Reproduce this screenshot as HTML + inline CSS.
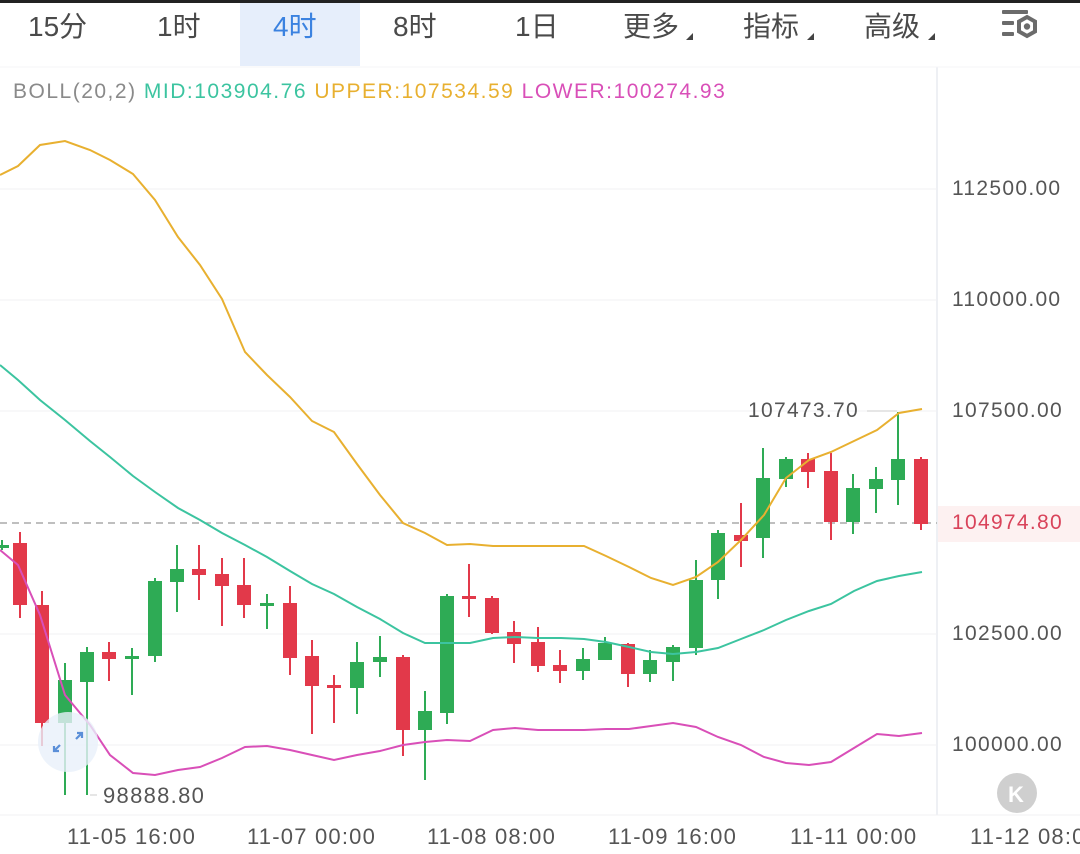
<!DOCTYPE html>
<html><head><meta charset="utf-8"><style>
html,body{margin:0;padding:0;background:#fff;width:1080px;height:854px;overflow:hidden;font-family:"Liberation Sans","Noto Sans CJK SC",sans-serif;}
.top{position:absolute;left:0;top:0;width:1080px;height:3px;background:#222;}
.tabsel{position:absolute;left:240px;top:3px;width:120px;height:63px;background:#e6eefb;}
.tab{position:absolute;top:5px;font-size:28px;color:#4a4a4a;white-space:nowrap;}
.tri{position:absolute;width:0;height:0;border-left:7px solid transparent;border-bottom:7px solid #444;}
.legend{position:absolute;left:13px;top:80px;font-size:21px;letter-spacing:1.5px;white-space:nowrap;}
.ax{position:absolute;left:952px;font-size:21px;color:#555;letter-spacing:1.3px;white-space:nowrap;}
.dt{position:absolute;top:824px;font-size:22px;color:#555;letter-spacing:1.2px;white-space:nowrap;}
</style></head><body>
<div class="top"></div>
<div class="tabsel"></div>
<div class="tab" style="left:28px">15分</div>
<div class="tab" style="left:157px">1时</div>
<div class="tab" style="left:273px;color:#3b82e0">4时</div>
<div class="tab" style="left:393px">8时</div>
<div class="tab" style="left:515px">1日</div>
<div class="tab" style="left:623px">更多</div><div class="tri" style="left:686px;top:33px"></div>
<div class="tab" style="left:743px">指标</div><div class="tri" style="left:807px;top:33px"></div>
<div class="tab" style="left:864px">高级</div><div class="tri" style="left:928px;top:33px"></div>
<svg style="position:absolute;left:1000px;top:8px" width="44" height="34" viewBox="0 0 44 34">
<rect x="2" y="2" width="26" height="4" rx="1" fill="#6b6b6b"/>
<rect x="2" y="13" width="12" height="4" rx="1" fill="#6b6b6b"/>
<rect x="2" y="24" width="12" height="4" rx="1" fill="#6b6b6b"/>
<polygon points="27,9 35,13.5 35,23.5 27,28 19,23.5 19,13.5" fill="none" stroke="#6b6b6b" stroke-width="4"/>
<circle cx="27" cy="18.5" r="3.2" fill="#6b6b6b"/>
</svg>
<div class="legend"><span style="color:#8a8a8a">BOLL(20,2)</span> <span style="color:#3cc4a0">MID:103904.76</span> <span style="color:#e8b030">UPPER:107534.59</span> <span style="color:#d94fb8">LOWER:100274.93</span></div>

<svg style="position:absolute;left:0;top:0" width="1080" height="854">
<line x1="937" y1="67" x2="937" y2="815" stroke="#eef0f4" stroke-width="2"/>
<line x1="0" y1="67" x2="1080" y2="67" stroke="#f4f5f7" stroke-width="1"/>
<g stroke="#f0f1f3" stroke-width="1">
<line x1="0" y1="189" x2="937" y2="189"/><line x1="0" y1="300" x2="937" y2="300"/>
<line x1="0" y1="411" x2="937" y2="411"/><line x1="0" y1="634" x2="937" y2="634"/>
<line x1="0" y1="745" x2="937" y2="745"/><line x1="0" y1="815" x2="1080" y2="815"/>
</g>
<line x1="0" y1="523" x2="937" y2="523" stroke="#aaa" stroke-width="1.5" stroke-dasharray="7,5"/>
<rect x="938" y="506" width="142" height="36" fill="#fdf1f1"/>
<g id="c"></g>
<polyline fill="none" stroke="#e8b030" stroke-width="2" points="0,175 18,166 40,145 65,141 90,150 110,160 133,174 155,200 178,237 200,265 222,299 245,352 267,375 290,397 312,421 334,432 357,464 380,495 403,523 425,533 447,545 470,544 493,546 515,546 538,546 561,546 584,546 606,556 629,567 651,578 673,585 696,577 718,562 741,540 764,515 786,478 809,460 831,452 854,441 877,430 899,413 922,409"/>
<polyline fill="none" stroke="#3cc4a0" stroke-width="2" points="0,365 18,380 40,400 65,420 90,441 110,457 133,476 155,492 178,508 200,520 222,533 245,545 267,557 290,571 312,584 334,594 357,607 380,619 403,633 425,643 447,643 470,643 493,638 515,637 538,638 561,638 584,639 606,642 629,647 651,652 673,654 696,652 718,648 741,639 764,630 786,620 809,611 831,604 854,591 877,581 899,576 922,572"/>
<polyline fill="none" stroke="#d94fb8" stroke-width="2" points="0,550 18,565 40,615 65,695 90,725 110,755 133,773 155,775 178,770 200,767 222,758 245,747 267,746 290,750 312,755 334,760 357,755 380,751 403,745 425,742 447,740 470,741 493,730 515,728 538,730 561,730 584,730 606,729 629,729 651,726 673,723 696,727 718,737 741,745 764,757 786,763 809,765 831,762 854,748 877,734 899,736 922,733"/>
<line x1="90" y1="795" x2="97" y2="795" stroke="#ccc"/>
<line x1="867" y1="411" x2="897" y2="411" stroke="#ccc"/>
<circle cx="68" cy="742" r="30" fill="#e9f0fa" opacity="0.8"/>
<path d="M60,745 l-6,6 m0,-5 v5 h5 M76,739 l6,-6 m-5,0 h5 v5" stroke="#5b8fd8" stroke-width="2.2" fill="none"/>
<circle cx="1017" cy="793" r="20" fill="#cfcfcf"/>
<text x="1008" y="802" font-size="22" fill="#fff" font-family="Liberation Sans" font-weight="bold">K</text>
</svg>
<script>
var d=[[2,545,548,540,550,'g'],[20,543,605,532,618,'r'],[42,605,723,591,746,'r'],[65,680,723,663,795,'g'],[87,652,682,647,795,'g'],[109,652,659,642,681,'r'],[132,656,659,648,695,'g'],[155,581,656,578,662,'g'],[177,569,582,545,612,'g'],[199,569,575,545,600,'r'],[222,574,586,558,626,'r'],[244,585,605,558,618,'r'],[267,603,605,594,629,'g'],[290,603,658,586,675,'r'],[312,656,686,640,734,'r'],[334,685,687,675,723,'r'],[357,662,688,642,714,'g'],[380,657,662,636,677,'g'],[403,657,730,655,756,'r'],[425,711,730,691,780,'g'],[447,596,713,594,724,'g'],[469,596,599,564,617,'r'],[492,598,633,596,634,'r'],[514,632,644,621,663,'r'],[538,642,666,627,672,'r'],[560,665,671,650,683,'r'],[583,659,671,648,680,'g'],[605,643,660,637,660,'g'],[628,644,674,643,687,'r'],[650,660,674,650,682,'g'],[673,647,662,645,681,'g'],[696,580,648,560,655,'g'],[718,533,580,530,599,'g'],[741,535,541,503,567,'r'],[763,478,538,448,558,'g'],[786,459,479,457,487,'g'],[808,459,472,453,488,'r'],[831,471,522,453,540,'r'],[853,488,522,474,534,'g'],[876,479,489,467,513,'g'],[898,459,480,412,505,'g'],[921,459,524,457,530,'r']];
var s='';d.forEach(function(c){var col=c[5]=='g'?'#2eab55':'#e2394a';s+='<line x1="'+c[0]+'" y1="'+c[3]+'" x2="'+c[0]+'" y2="'+c[4]+'" stroke="'+col+'" stroke-width="2"/><rect x="'+(c[0]-7)+'" y="'+c[1]+'" width="14" height="'+Math.max(3,c[2]-c[1])+'" fill="'+col+'"/>';});
document.getElementById('c').innerHTML=s;
</script>
<div class="ax" style="top:177px">112500.00</div>
<div class="ax" style="top:288px">110000.00</div>
<div class="ax" style="top:399px">107500.00</div>
<div class="ax" style="top:511px;color:#d9435a">104974.80</div>
<div class="ax" style="top:622px">102500.00</div>
<div class="ax" style="top:733px">100000.00</div>
<div class="ax" style="left:748px;top:399px">107473.70</div>
<div class="ax" style="left:103px;top:783px;font-size:22px">98888.80</div>
<div class="dt" style="left:67px">11-05 16:00</div>
<div class="dt" style="left:247px">11-07 00:00</div>
<div class="dt" style="left:427px">11-08 08:00</div>
<div class="dt" style="left:608px">11-09 16:00</div>
<div class="dt" style="left:790px">11-11 00:00</div>
<div class="dt" style="left:970px">11-12 08:00</div>
</body></html>
